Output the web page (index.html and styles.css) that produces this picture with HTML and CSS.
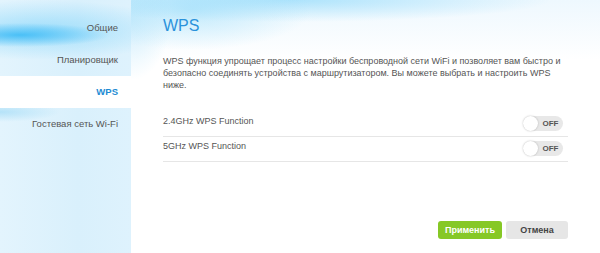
FILE: index.html
```html
<!DOCTYPE html>
<html lang="ru">
<head>
    <meta charset="UTF-8">
    <meta name="viewport" content="width=device-width, initial-scale=1.0">
    <title>WPS</title>
    <link rel="stylesheet" href="styles.css">
</head>
<body>
    <div class="page">
        <div class="sidebar">
            <div class="menu-item">Общие</div>
            <div class="menu-item">Планировщик</div>
            <div class="menu-item active">WPS</div>
            <div class="menu-item">Гостевая сеть Wi-Fi</div>
        </div>
        <div class="content">
            <h1>WPS</h1>
            <p class="intro">WPS функция упрощает процесс настройки беспроводной сети WiFi и позволяет вам быстро и безопасно соединять устройства с маршрутизатором. Вы можете выбрать и настроить WPS ниже.</p>
            <div class="option-row first">
                <span>2.4GHz WPS Function</span>
                <div class="toggle"><span class="knob"></span><span class="state">OFF</span></div>
            </div>
            <div class="option-row">
                <span>5GHz WPS Function</span>
                <div class="toggle"><span class="knob"></span><span class="state">OFF</span></div>
            </div>
            <div class="actions">
                <button class="btn apply">Применить</button>
                <button class="btn cancel">Отмена</button>
            </div>
        </div>
    </div>
</body>
</html>
```
FILE: styles.css
```css
body {
    margin: 0;
    font-family: 'Liberation Sans', Arial, sans-serif;
    background-color: #ffffff;
    overflow: hidden;
}
.page {
    display: flex;
    height: 253px;
}
.sidebar {
    width: 131px;
    flex: 0 0 131px;
    padding-top: 12px;
    box-sizing: border-box;
    background:
        radial-gradient(ellipse 90px 12px at 20px 35px, rgba(40, 180, 245, 0.75), rgba(40, 180, 245, 0) 100%),
        radial-gradient(ellipse 140px 30px at 40px 30px, rgba(120, 210, 250, 0.6), rgba(120, 210, 250, 0) 100%),
        radial-gradient(ellipse 60px 10px at 0px 112px, rgba(150, 215, 245, 0.6), rgba(150, 215, 245, 0) 100%),
        linear-gradient(90deg, #e3f4fd 0%, #d9f0fc 60%, #def2fd 100%);
}
.menu-item {
    height: 32px;
    line-height: 32px;
    text-align: right;
    padding-right: 13px;
    font-size: 9.5px;
    color: #555555;
}
.menu-item.active {
    background-color: #ffffff;
    color: #1d8bd3;
    font-weight: bold;
}
.content {
    flex: 1;
    padding: 0 32px;
    display: flex;
    flex-direction: column;
    background:
        radial-gradient(ellipse 120px 40px at 60px 10px, rgba(150, 220, 250, 0.55), rgba(150, 220, 250, 0) 100%),
        radial-gradient(ellipse 260px 22px at 160px 0px, rgba(120, 210, 250, 0.55), rgba(120, 210, 250, 0) 100%),
        radial-gradient(ellipse 40px 60px at 0px 20px, rgba(200, 235, 252, 0.8), rgba(200, 235, 252, 0) 100%),
        linear-gradient(180deg, #eef8fe 0px, #ffffff 60px);
}
.content h1 {
    margin: 16px 0 0;
    font-size: 16px;
    font-weight: normal;
    color: #2a92db;
    line-height: 20px;
}
.intro {
    margin: 19px 0 0;
    font-size: 9px;
    line-height: 12px;
    color: #555555;
}
.option-row {
    display: flex;
    justify-content: space-between;
    align-items: flex-start;
    height: 24px;
    box-sizing: content-box;
    border-bottom: 1px solid #e6e6e6;
    font-size: 9px;
    line-height: 12px;
    color: #555555;
}
.option-row span {
    padding-top: 3px;
}
.option-row.first {
    margin-top: 21px;
}
.toggle {
    width: 40px;
    height: 15px;
    margin-top: 4px;
    margin-right: 5px;
    border-radius: 8px;
    background-color: #e8e8e8;
    display: flex;
    align-items: center;
}
.toggle .knob {
    padding: 0;
    width: 15px;
    height: 15px;
    border-radius: 50%;
    background-color: #ffffff;
    box-shadow: 0 0 2px rgba(0, 0, 0, 0.25);
}
.toggle .state {
    padding: 0;
    flex: 1;
    text-align: center;
    font-size: 8px;
    font-weight: bold;
    color: #555555;
}
.actions {
    margin-top: auto;
    margin-bottom: 14px;
    display: flex;
    justify-content: flex-end;
    gap: 4px;
}
.btn {
    height: 18px;
    border: none;
    border-radius: 3px;
    font-family: inherit;
    font-size: 9px;
    font-weight: bold;
    padding: 0;
}
.apply {
    width: 64px;
    background-color: #86c826;
    color: #ffffff;
}
.cancel {
    width: 62px;
    background-color: #e6e6e6;
    color: #444444;
}
```
